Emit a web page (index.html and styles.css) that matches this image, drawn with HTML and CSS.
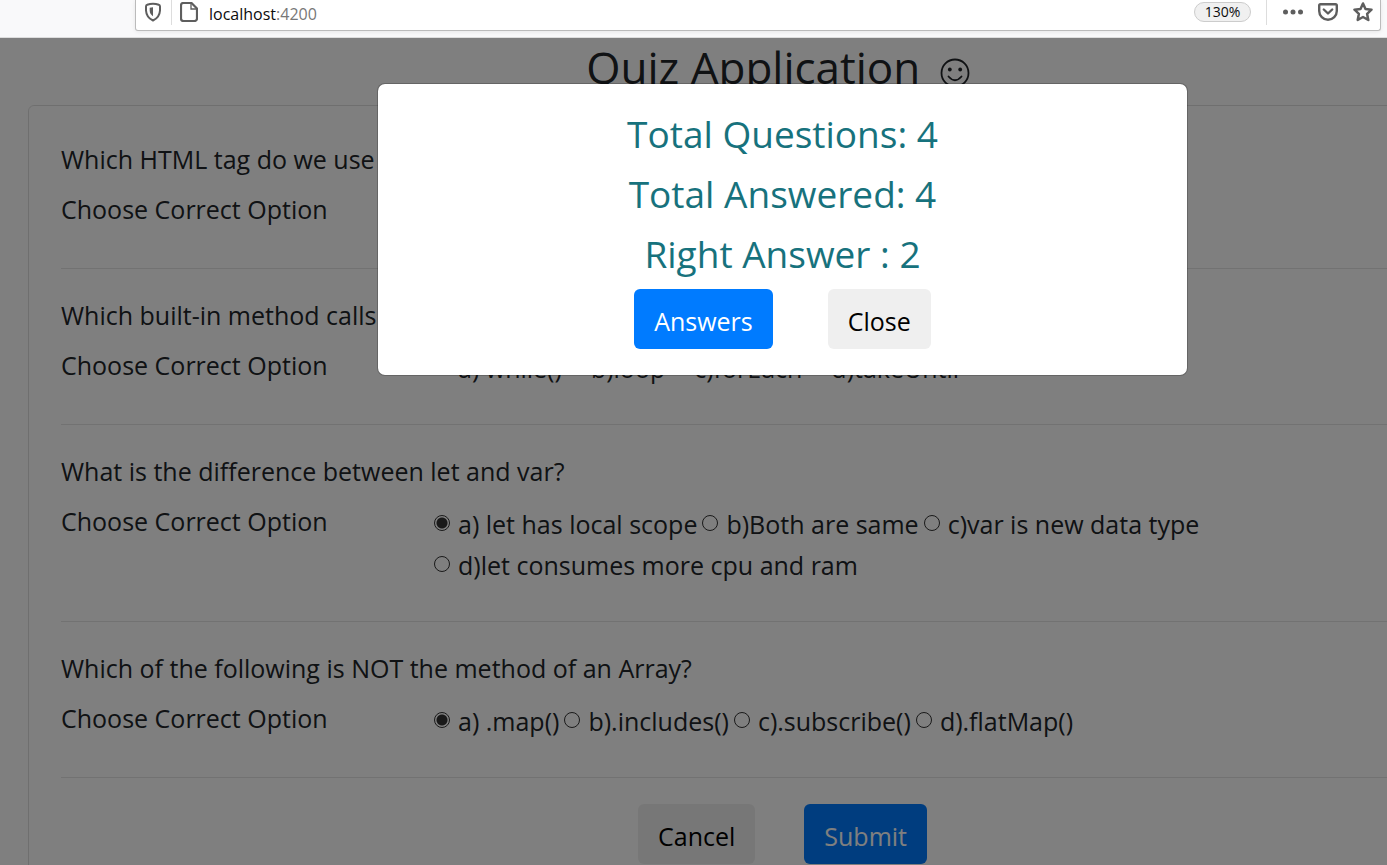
FILE: index.html
```html
<!DOCTYPE html>
<html lang="en">
<head>
<meta charset="utf-8">
<title>Quiz Application</title>
<link rel="stylesheet" href="styles.css">
</head>
<body>
<header class="toolbar">
  <div class="urlbar">
    <svg class="icon shield" viewBox="0 0 16 20" width="16" height="20" aria-hidden="true"><path d="M2.2 2.8Q8 .6 13.8 2.8Q15 3.2 15 4.5V8.500Q14.600 15.500 8 18.500Q1.400 15.500 1 8.500V4.500Q1 3.200 2.200 2.800Z" fill="none" stroke="currentColor" stroke-width="2"/><path d="M8 5.200V14.200Q4.700 12 4.700 8.800V5.800Q6.300 5.200 8 5.200Z" fill="currentColor"/></svg>
    <span class="divider"></span>
    <svg class="icon" viewBox="0 0 18 20" width="18" height="20" aria-hidden="true"><path d="M3.500 1H11.500L17 6.500V16.500Q17 19 14.500 19H3.500Q1 19 1 16.500V3.500Q1 1 3.500 1Z" fill="none" stroke="currentColor" stroke-width="2.200"/><path d="M11 2V7H16" fill="none" stroke="currentColor" stroke-width="1.300"/></svg>
    <span class="address">localhost<span class="port">:4200</span></span>
    <button class="zoom" type="button">130%</button>
    <span class="divider"></span>
    <svg class="icon dots" viewBox="0 0 20 6" width="20" height="6" aria-hidden="true"><g fill="currentColor"><circle cx="2.500" cy="3" r="2.500"/><circle cx="10" cy="3" r="2.500"/><circle cx="17.500" cy="3" r="2.500"/></g></svg>
    <svg class="icon" viewBox="0 0 20 18" width="20" height="18" aria-hidden="true"><path d="M2.500 1.200H17.500Q18.800 1.200 18.800 2.500V8A8.800 8.800 0 0 1 1.200 8V2.500Q1.200 1.200 2.500 1.200Z" fill="none" stroke="currentColor" stroke-width="2.400"/><path d="M5.800 6.500L10 10.500L14.200 6.500" fill="none" stroke="currentColor" stroke-width="2.400" stroke-linecap="round" stroke-linejoin="round"/></svg>
    <svg class="icon" viewBox="0 0 20 20" width="20" height="20" aria-hidden="true"><path d="M10 1.500L12.500 7L18.500 7.700L14.100 11.800L15.300 18L10 15L4.700 18L5.900 11.800L1.500 7.700L7.500 7Z" fill="none" stroke="currentColor" stroke-width="2.500" stroke-linejoin="round"/></svg>
  </div>
</header>
<div class="viewport">
<main class="page">
  <h1 class="title">Quiz Application <svg class="smiley" viewBox="0 0 30 30" width="30" height="30" role="img" aria-label="smile"><circle cx="15" cy="15" r="13.500" fill="none" stroke="currentColor" stroke-width="1.800"/><circle cx="9.800" cy="11.500" r="1.900" fill="currentColor"/><circle cx="20.200" cy="11.500" r="1.900" fill="currentColor"/><path d="M8.500 18.500Q15 26 21.500 18.500" fill="none" stroke="currentColor" stroke-width="1.800" stroke-linecap="round"/></svg></h1>
  <form class="card">
    <section class="item">
      <p class="question">Which HTML tag do we use</p>
      <div class="row"><span class="hint">Choose Correct Option</span></div>
    </section>
    <section class="item">
      <p class="question">Which built-in method calls</p>
      <div class="row"><span class="hint">Choose Correct Option</span>
        <div class="options">
          <label class="option"><input type="radio" name="q2">a) while()</label>
          <label class="option"><input type="radio" name="q2">b)loop</label>
          <label class="option"><input type="radio" name="q2">c)forEach</label>
          <label class="option"><input type="radio" name="q2">d)takeUntil</label>
        </div></div>
    </section>
    <section class="item">
      <p class="question">What is the difference between let and var?</p>
      <div class="row"><span class="hint">Choose Correct Option</span>
        <div class="options">
          <label class="option"><input type="radio" name="q3" checked>a) let has local scope</label>
          <label class="option"><input type="radio" name="q3">b)Both are same</label>
          <label class="option"><input type="radio" name="q3">c)var is new data type</label>
          <label class="option"><input type="radio" name="q3">d)let consumes more cpu and ram</label>
        </div></div>
    </section>
    <section class="item">
      <p class="question">Which of the following is NOT the method of an Array?</p>
      <div class="row"><span class="hint">Choose Correct Option</span>
        <div class="options">
          <label class="option"><input type="radio" name="q4" checked>a) .map()</label>
          <label class="option"><input type="radio" name="q4">b).includes()</label>
          <label class="option"><input type="radio" name="q4">c).subscribe()</label>
          <label class="option"><input type="radio" name="q4">d).flatMap()</label>
        </div></div>
    </section>
    <div class="actions form-actions">
      <button class="btn" type="button">Cancel</button>
      <button class="btn primary" type="submit">Submit</button>
    </div>
  </form>
  <div class="overlay">
    <div class="modal" role="dialog" aria-label="Result">
      <p class="score">Total Questions: 4</p>
      <p class="score">Total Answered: 4</p>
      <p class="score">Right Answer : 2</p>
      <div class="actions">
        <button class="btn primary" type="button">Answers</button>
        <button class="btn" type="button">Close</button>
      </div>
    </div>
  </div>
</main>
</div>
</body>
</html>
```
FILE: styles.css
```css
* { box-sizing: border-box; }
body {
  margin: 0;
  height: 100vh;
  display: flex;
  flex-direction: column;
  overflow: hidden;
  background: #fff;
  color: #212529;
  font: 25px/40px "Segoe UI", "Open Sans", sans-serif;
}
h1, p { margin: 0; font-weight: 400; }

.toolbar {
  flex: none;
  padding: 0 6px 6px 135px;
  background: #f9f9fa;
  border-bottom: 1px solid #ddd;
}
.urlbar {
  display: flex;
  align-items: center;
  height: 31px;
  padding: 0 7px 6px 9px;
  background: #fff;
  border: 1px solid #bbb;
  border-top: 0;
  border-radius: 0 0 3px 3px;
  box-shadow: 0 1px 4px rgba(0, 0, 0, .08);
}
.icon { flex: none; color: #5e5e5e; margin-left: 15px; }
.shield { margin-left: 0; }
.divider { width: 1px; height: 25px; margin-left: 10px; background: #ddd; }
.divider + .icon { margin-left: 8px; }
.divider + .dots { margin-left: 16px; }
.address { flex: 1; margin-left: 11px; font-size: 16px; line-height: 20px; padding-top: 4px; color: #0c0c0d; }
.port { color: #777; }
.zoom {
  width: 57px;
  height: 20px;
  margin-right: 5px;
  padding: 0;
  border: 1px solid #ccc;
  border-radius: 10px;
  background: #f0f0f0;
  color: #0c0c0d;
  font: 14px/18px "Segoe UI", "Open Sans", sans-serif;
}

/* The form is wider than the window; the rest is cut off at the right. */
.viewport { flex: 1; min-height: 0; overflow: hidden; }
.page { position: relative; height: 100%; margin-right: -178px; overflow: hidden; }
.title {
  height: 62px;
  padding-right: 9px;
  font-size: 44px;
  line-height: 58px;
  text-align: center;
  white-space: nowrap;
}
.smiley { margin-left: 8px; vertical-align: -4px; }
.card {
  margin: 5px 28px 0;
  padding: 7px 32px 32px;
  border: 1px solid rgba(0, 0, 0, .125);
  border-radius: 6px;
}
.item { padding: 26px 0 38px; border-bottom: 1px solid rgba(0, 0, 0, .1); }
.row { display: flex; margin-top: 10px; min-height: 41px; }
.hint { flex: none; width: 372px; }
.options { display: flex; flex-wrap: wrap; column-gap: 4px; padding-top: 3px; margin-bottom: -3px; line-height: 41px; }
.option { display: flex; white-space: nowrap; }
.option input {
  appearance: none;
  width: 16px;
  height: 16px;
  margin: 11px 8px 0 1px;
  border: 1px solid #333;
  border-radius: 50%;
  background: #fff;
}
.option input:checked { background: radial-gradient(circle, #333 5px, #fff 6px); }
.actions { display: flex; justify-content: center; gap: 55px; }
.form-actions { gap: 49px; padding-top: 26px; }
.btn {
  height: 60px;
  padding: 3px 20px 0;
  border: 0;
  border-radius: 6px;
  background: #efefef;
  color: #000;
  font: inherit;
}
.primary { background: #007bff; color: #fff; }

.overlay {
  position: absolute;
  inset: 0;
  display: flex;
  justify-content: center;
  align-items: flex-start;
  padding-top: 45px;
  background: rgba(0, 0, 0, .5);
}
.modal {
  width: 811px;
  padding: 20px 20px 26px;
  background: #fff;
  background-clip: padding-box;
  border: 1px solid rgba(0, 0, 0, .2);
  border-radius: 8px;
  text-align: center;
}
.score { color: #17727d; font-size: 37px; line-height: 60px; }
.score + .actions { margin-top: 5px; }
```
